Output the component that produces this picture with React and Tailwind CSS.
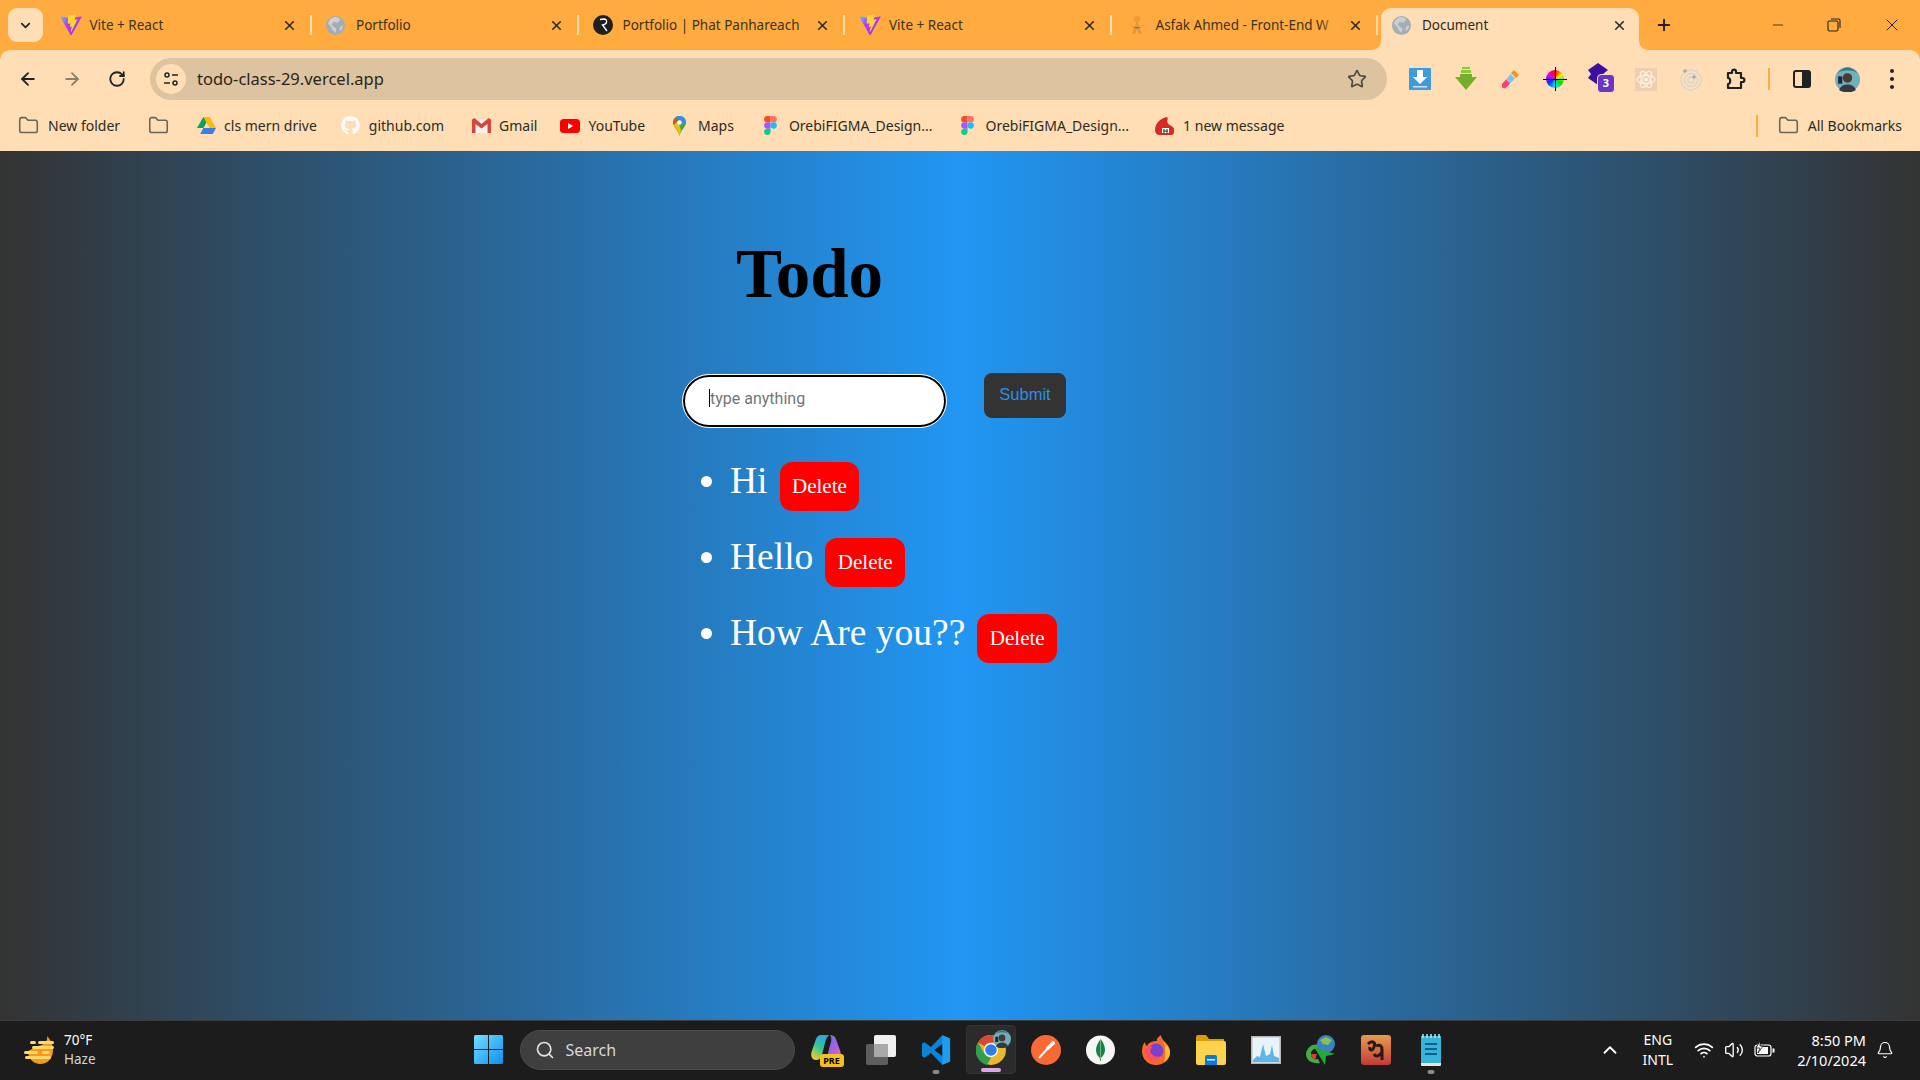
import React from "react";
import {
  ArrowLeft,
  ArrowRight,
  Bell,
  ChevronDown,
  ChevronUp,
  Folder,
  Minus,
  Plus,
  RotateCw,
  Search,
  Star,
  Volume2,
  Wifi,
  X,
} from "lucide-react";
import { FaGithub } from "react-icons/fa";

const ViteIcon = () => (
  <svg width="22" height="22" viewBox="0 0 410 404" className="shrink-0">
    <defs>
      <linearGradient id="viteV" x1="0" y1="0" x2="1" y2="0.8">
        <stop offset="0" stopColor="#41d1ff" />
        <stop offset="0.4" stopColor="#bd34fe" />
        <stop offset="1" stopColor="#8f3cf0" />
      </linearGradient>
    </defs>
    <path fill="url(#viteV)" d="M399.641 59.5246L215.643 388.545C211.844 395.338 202.084 395.378 198.228 388.618L10.5817 59.5563C6.38087 52.1896 12.6802 43.2665 21.0281 44.7586L205.223 77.6824C206.398 77.8924 207.601 77.8904 208.776 77.6763L389.119 44.8058C397.439 43.2894 403.768 52.1434 399.641 59.5246Z" />
    <path fill="#ffd62e" d="M292.965 1.5744L156.801 28.2552C154.563 28.6937 152.906 30.5903 152.771 32.8664L144.395 174.33C144.198 177.662 147.258 180.248 150.51 179.498L188.42 170.749C191.967 169.931 195.172 173.055 194.443 176.622L183.18 231.775C182.422 235.487 185.907 238.661 189.532 237.56L212.947 230.446C216.577 229.344 220.065 232.527 219.297 236.242L201.398 322.875C200.278 328.294 207.486 331.249 210.492 326.603L212.5 323.5L323.454 102.072C325.312 98.3645 322.108 94.137 318.036 94.9228L279.014 102.454C275.347 103.161 272.227 99.746 273.262 96.1583L298.731 7.86689C299.767 4.27314 296.636 0.855181 292.965 1.5744Z" />
  </svg>
);

const GlobeIcon = () => (
  <svg width="19" height="19" viewBox="0 0 20 20" className="shrink-0">
    <circle cx="10" cy="10" r="10" fill="#a3adb8" />
    <path fill="#e6e2da" d="M8 1 13 1.500 15 4 12 7 8 6 6 9 9 12 11 13 10 18 7 15 6 12 2 8 4 4Z" opacity="0.65" />
    <path fill="#e6e2da" d="M15 11 18 10 17 14 14 16Z" opacity="0.65" />
  </svg>
);

const RIcon = () => (
  <svg width="20" height="20" viewBox="0 0 20 20" className="shrink-0">
    <circle cx="10" cy="10" r="10" fill="#1f1f1f" />
    <path d="M7 4.500 11 4C15 4 14.500 9.500 9.500 10L14 16" fill="none" stroke="#fff" strokeWidth="1.300" />
  </svg>
);

const AsfakIcon = () => (
  <svg width="22" height="20" viewBox="0 0 22 20" className="shrink-0">
    <circle cx="11" cy="4" r="3" fill="#f09a32" />
    <path d="M11 6 16 19H13L11 14 9 19H6Z" fill="#f0922c" />
    <path d="M1 8 11 12 21 8 11 15Z" fill="#e8a34a" />
    <path d="M7 12H15L11 14Z" fill="#5b7cc4" />
  </svg>
);

const Tab = ({ icon, title, fade }) => (
  <div className="relative flex h-[34px] w-[266.5px] shrink-0 items-center pl-[14px] pr-[15px]">
    <div className="flex w-[30px] shrink-0 items-center">{icon}</div>
    <span className="flex-1 whitespace-nowrap text-[13.5px] text-[#3b3322]">{title}</span>
    {fade && <div className="absolute right-[36px] top-0 h-full w-[24px] bg-gradient-to-r from-transparent to-[#ffab40]" />}
    <X size={15} strokeWidth={2.6} className="shrink-0 text-[#2b2b2b]" />
    <div className="absolute right-0 top-[7px] h-[20px] w-[2px] bg-[#ffd9a8]" />
  </div>
);

const ActiveTab = () => (
  <div className="relative ml-[3px] flex h-[42px] w-[258px] shrink-0 items-center self-end rounded-t-[10px] bg-[#ffdeb5] pb-[8px] pl-[11px] pr-[12px]">
    <svg width="10" height="10" viewBox="0 0 10 10" className="absolute bottom-0 left-[-10px]">
      <path d="M10 0V10H0C6 10 10 6 10 0Z" fill="#ffdeb5" />
    </svg>
    <svg width="10" height="10" viewBox="0 0 10 10" className="absolute bottom-0 right-[-10px]">
      <path d="M0 0V10H10C4 10 0 6 0 0Z" fill="#ffdeb5" />
    </svg>
    <div className="flex w-[30px] shrink-0 items-center"><GlobeIcon /></div>
    <span className="flex-1 text-[13.5px] text-[#2f2a20]">Document</span>
    <X size={15} strokeWidth={2.6} className="text-[#2b2b2b]" />
  </div>
);

const DownloadExt = () => (
  <svg width="22" height="22" viewBox="0 0 22 22">
    <rect width="22" height="22" rx="1" fill="#3d9be0" />
    <path d="M8 2H14V9H18L11 16 4 9H8Z" fill="#fff" />
    <rect x="4" y="18" width="14" height="1.500" fill="#cfe6f7" />
  </svg>
);

const GreenExt = () => (
  <svg width="22" height="24" viewBox="0 0 22 24">
    <path d="M7 0H15V2H7ZM6 3H16V6H6Z" fill="#8cc63f" />
    <path d="M5 7H17V10H22L11 23 0 10H5Z" fill="#76ad2a" />
  </svg>
);

const DropperExt = () => (
  <svg width="20" height="22" viewBox="0 0 20 22">
    <path d="M13 2 18 7 15 10 10 5Z" fill="#f7931e" />
    <path d="M9.500 6 14 10.500 9 15.500 5 11.500Z" fill="#7cc5ef" />
    <path d="M5 11.500 9 15.500 4 20.500 1 19.500 1 16Z" fill="#ff3d77" />
  </svg>
);

const WheelExt = () => (
  <div className="relative h-[18px] w-[18px]">
    <div className="h-full w-full rounded-full bg-[conic-gradient(#ff0000,#ffee00,#00e000,#00e5ff,#0030ff,#e000ff,#ff0000)]" />
    <div className="absolute left-[8.5px] top-[-3px] h-[24px] w-[1px] bg-black" />
    <div className="absolute left-[-3px] top-[8.5px] h-[1px] w-[24px] bg-black" />
  </div>
);

const PurpleExt = () => (
  <div className="relative h-[26px] w-[30px]">
    <svg width="22" height="24" viewBox="0 0 22 24" className="absolute left-0 top-[-3px]">
      <path d="M11 0 21 7 16 11 21 15 11 22 1 15 4 11 1 7Z" fill="#3d0fa0" />
    </svg>
    <div className="absolute left-[10px] top-[8px] flex h-[19px] w-[18px] items-center justify-center rounded-[4px] border border-[#ffdeb5] bg-[#6a35c4] text-[11px] font-bold text-white">3</div>
  </div>
);

const ReactExt = () => (
  <svg width="22" height="23" viewBox="0 0 22 23">
    <rect width="22" height="23" fill="#ecd0b0" />
    <g fill="none" stroke="#fdf0e0" strokeWidth="1.200">
      <ellipse cx="11" cy="11.500" rx="9" ry="4" />
      <ellipse cx="11" cy="11.500" rx="9" ry="4" transform="rotate(60 11 11.500)" />
      <ellipse cx="11" cy="11.500" rx="9" ry="4" transform="rotate(120 11 11.500)" />
    </g>
    <circle cx="11" cy="11.500" r="2" fill="#fdf0e0" />
  </svg>
);

const OrbitExt = () => (
  <svg width="22" height="23" viewBox="0 0 22 23">
    <g fill="none" stroke="#d8d6d0" strokeWidth="1.400">
      <circle cx="11" cy="12" r="10" />
      <circle cx="11" cy="12" r="6.500" />
      <circle cx="11" cy="12" r="3" />
    </g>
    <circle cx="5" cy="3" r="1.800" fill="#a9a9a6" />
    <circle cx="14" cy="9" r="1.800" fill="#a9a9a6" />
  </svg>
);

const PuzzleIcon = () => (
  <svg width="20" height="22" viewBox="0 0 20 22" fill="none" stroke="#202124" strokeWidth="2.200" strokeLinejoin="round">
    <path d="M2 5H6V3.500C6 1 10 1 10 3.500V5H15V10H16.500C19 10 19 14 16.500 14H15V20H2V16C5 16 5 10 2 10Z" />
  </svg>
);

const SidePanelIcon = () => (
  <svg width="18" height="18" viewBox="0 0 18 18">
    <rect x="1" y="1" width="16" height="16" rx="2" fill="none" stroke="#202124" strokeWidth="2" />
    <rect x="9" y="1" width="8" height="16" rx="1" fill="#202124" />
  </svg>
);

const Avatar = ({ size }) => (
  <svg width={size} height={size} viewBox="0 0 24 24" className="shrink-0">
    <circle cx="12" cy="12" r="12" fill="#6fb0ba" />
    <path d="M2 6C7 2 17 2 22 6 19 3 15 .5 12 .5 9 .5 5 3 2 6Z" fill="#3a7280" />
    <circle cx="12" cy="10.500" r="4.500" fill="#4a3a32" />
    <path d="M4 22C6 15 18 15 20 22 16 25 8 25 4 22Z" fill="#2f3a44" />
    <rect x="3" y="9" width="4" height="7" fill="#1f2a33" />
  </svg>
);

const DriveIcon = () => (
  <svg width="19" height="17" viewBox="0 0 19 17">
    <path d="M6.300 0H12.700L6.400 11H0Z" fill="#0fa15d" />
    <path d="M6.300 0H12.700L19 11H12.600Z" fill="#fbbc04" />
    <path d="M3.200 17 6.400 11H19L15.800 17Z" fill="#3b7ded" />
  </svg>
);

const GmailIcon = () => (
  <svg width="19" height="15" viewBox="0 0 19 15">
    <path d="M0 1H19V15H0Z" fill="#f4f1ec" />
    <path d="M0 1.500V15H3.500V6L9.500 10.500 15.500 6V15H19V1.500L16.500 0 9.500 6 2.500 0Z" fill="#d6473b" />
  </svg>
);

const YoutubeIcon = () => (
  <svg width="20" height="14" viewBox="0 0 20 14">
    <rect width="20" height="14" rx="3.500" fill="#f00" />
    <path d="M8 4 13 7 8 10Z" fill="#fff" />
  </svg>
);

const MapsIcon = () => (
  <svg width="13" height="20" viewBox="0 0 13 20">
    <path d="M6.500 0C10 0 13 2.800 13 6.300 13 11 8 13.500 6.500 20 5 13.500 0 11 0 6.300 0 2.800 3 0 6.500 0Z" fill="#34a853" />
    <path d="M6.500 0C10 0 13 2.800 13 6.300L9 8 6 3 2.500 1.400C3.500.5 5 0 6.500 0Z" fill="#4285f4" />
    <path d="M2.500 1.400 0 6.300 .7 9 5 5Z" fill="#ea4335" />
    <path d="M.7 9C2 11.500 5 13.500 6.500 20L8 14 5 5Z" fill="#fbbc04" />
    <circle cx="6.500" cy="6.500" r="2.200" fill="#fff" />
  </svg>
);

const FigmaIcon = () => (
  <svg width="13" height="19" viewBox="0 0 12 18">
    <path d="M0 3a3 3 0 0 1 3-3h3v6H3a3 3 0 0 1-3-3Z" fill="#f24e1e" />
    <path d="M6 0h3a3 3 0 0 1 0 6H6Z" fill="#ff7262" />
    <path d="M0 9a3 3 0 0 1 3-3h3v6H3a3 3 0 0 1-3-3Z" fill="#a259ff" />
    <circle cx="9" cy="9" r="3" fill="#1abcfe" />
    <path d="M0 15a3 3 0 0 1 3-3h3v3a3 3 0 0 1-6 0Z" fill="#0acf83" />
  </svg>
);

const MessageIcon = () => (
  <svg width="20" height="20" viewBox="0 0 20 20">
    <path d="M13 1C7 2 1 7 1 14c0 3 2 5 5 5h11c2 0 3-1 3-3v-3c0-3-6-3-7-8 1-2 1-3 0-4Z" fill="#d62b20" />
    <path d="M8 12h7v5H8Z" fill="#fff" />
    <path d="M10 13v4M13 13v4M9 15h5" stroke="#333" strokeWidth="1" />
  </svg>
);

const Bookmark = ({ icon, label, gap, left }) => (
  <div className={`flex items-center ${gap} ${left}`}>
    {icon}
    {label && <span className="whitespace-nowrap text-[14px] text-[#2e2a22]">{label}</span>}
  </div>
);

const SunHaze = () => (
  <svg width="32" height="30" viewBox="0 0 32 30">
    <path d="M4 16C4 24 10 29 16 29 24 29 29 23 29 15 29 9 26 4 23 1 24 7 20 10 14 11Z" fill="#f39a1f" />
    <g fill="#ffd76a">
      <rect x="6" y="6" width="6" height="3" rx="1.500" />
      <rect x="14" y="6" width="16" height="3" rx="1.500" />
      <rect x="8" y="11" width="22" height="3" rx="1.500" />
      <rect x="0" y="16" width="14" height="3" rx="1.500" />
      <rect x="18" y="16" width="8" height="3" rx="1.500" />
      <rect x="1" y="21" width="26" height="3" rx="1.500" />
    </g>
  </svg>
);

const WindowsLogo = () => (
  <svg width="29" height="29" viewBox="0 0 29 29">
    <defs>
      <linearGradient id="winG" x1="0" y1="0" x2="1" y2="1">
        <stop offset="0" stopColor="#72e0ff" />
        <stop offset="1" stopColor="#0f8ef0" />
      </linearGradient>
    </defs>
    <path d="M0 1.500A1.500 1.500 0 0 1 1.500 0H14V14H0ZM15 0H27.500A1.500 1.500 0 0 1 29 1.500V14H15ZM0 15H14V29H1.500A1.500 1.500 0 0 1 0 27.500ZM15 15H29V27.500A1.500 1.500 0 0 1 27.500 29H15Z" fill="url(#winG)" />
  </svg>
);

const CopilotIcon = () => (
  <div className="relative h-[32px] w-[30px]">
    <svg width="30" height="27" viewBox="0 0 30 27">
      <defs>
        <linearGradient id="copA" x1="0.8" y1="0" x2="0.2" y2="1">
          <stop offset="0" stopColor="#2f9fe8" />
          <stop offset="0.5" stopColor="#2fc4a0" />
          <stop offset="1" stopColor="#f2d02e" />
        </linearGradient>
        <linearGradient id="copB" x1="0" y1="0" x2="1" y2="1">
          <stop offset="0" stopColor="#4a7cf0" />
          <stop offset="0.6" stopColor="#b05ee0" />
          <stop offset="1" stopColor="#ee6fb0" />
        </linearGradient>
      </defs>
      <path d="M10 1H18C15 4 14 8 13 13L11 21C10 24 8 26 5 26 1 26-.5 22 .5 18L5 5C6 2.500 8 1 10 1Z" fill="url(#copA)" />
      <path d="M19 1C22 1 24 2.500 25 5L29.500 18C30.500 22 28 26 24 26H13C16 24 17 20 18 15L20 8C20.500 5 20.500 3 19 1Z" fill="url(#copB)" />
    </svg>
    <div className="absolute bottom-[-1px] right-[-3px] flex h-[13px] w-[24px] items-center justify-center rounded-[3px] bg-[#f7c11b] text-[9px] font-bold leading-none text-black">PRE</div>
  </div>
);

const TaskViewIcon = () => (
  <svg width="30" height="30" viewBox="0 0 30 30">
    <rect x="0" y="9" width="22" height="21" rx="2" fill="#5e5e5e" />
    <rect x="8" y="0" width="22" height="22" rx="2" fill="#f0f0f0" />
    <rect x="8" y="9" width="14" height="13" fill="#a8a8a8" />
  </svg>
);

const VsCodeIcon = () => (
  <svg width="30" height="30" viewBox="0 0 100 100">
    <path d="M71 1 33 40 12 24 3 29V71L12 76 33 60 71 99 97 88V12ZM73 28V72L44 50Z" fill="#0a84d6" fillRule="evenodd" />
    <path d="M71 1 97 12V88L71 99Z" fill="#1e9cf0" />
  </svg>
);

const ChromeIcon = () => (
  <svg width="30" height="30" viewBox="0 0 30 30">
    <circle cx="15" cy="15" r="15" fill="#e8b92c" />
    <path d="M15 0A15 15 0 0 1 28 7.500H15A7.500 7.500 0 0 0 8.500 11.300L2 7.500A15 15 0 0 1 15 0Z" fill="#d9463a" />
    <path d="M2 7.500 8.500 18.800A7.500 7.500 0 0 0 15 22.500L11 30A15 15 0 0 1 2 7.500Z" fill="#2f9e4f" />
    <circle cx="15" cy="15" r="7" fill="#fff" />
    <circle cx="15" cy="15" r="5.800" fill="#2f7ded" />
  </svg>
);

const PostmanIcon = () => (
  <svg width="30" height="30" viewBox="0 0 30 30">
    <circle cx="15" cy="15" r="15" fill="#f76935" />
    <path d="M8 23 18 12" stroke="#fff" strokeWidth="2" />
    <path d="M16 14 21 9" stroke="#fff" strokeWidth="3.500" />
    <circle cx="22" cy="8" r="2" fill="#fff" />
  </svg>
);

const MongoIcon = () => (
  <svg width="29" height="30" viewBox="0 0 29 30">
    <circle cx="14.500" cy="15" r="14.500" fill="#f6f6f6" />
    <path d="M14.500 4C18 8 19 12 19 15 19 19 16 22 15 23L14.800 26H14L13.800 23C12 21 10 19 10 15 10 11 12 8 14.500 4Z" fill="#13834a" />
    <path d="M14.500 4V24" stroke="#89c27d" strokeWidth=".8" />
  </svg>
);

const FirefoxIcon = () => (
  <svg width="30" height="30" viewBox="0 0 30 30">
    <path d="M15 30C7 30 1 24 1 16 1 12 2 9 4 7 4 9 5 10 6 11 8 7 12 6 16 6 15 4 17 2 20 0 20 3 22 5 25 8 28 11 29 14 29 17 29 24 23 30 15 30Z" fill="#f5692c" />
    <path d="M22 6C25 9 29 13 29 17 29 21 27 25 23 27 25 22 25 12 22 6Z" fill="#ffbd2e" />
    <circle cx="15" cy="16" r="7.500" fill="#7b3fd1" />
    <path d="M4 14C7 11 10 11 12 12 9 13 9 16 10 18 12 22 18 23 22 20 19 26 10 27 6 22 4 20 3 17 4 14Z" fill="#ff4f5e" />
  </svg>
);

const ExplorerIcon = () => (
  <svg width="30" height="30" viewBox="0 0 30 30">
    <path d="M0 2A2 2 0 0 1 2 0H10L13 4H28V12H0Z" fill="#d99c0a" />
    <path d="M0 6H28A2 2 0 0 1 30 8V28A2 2 0 0 1 28 30H2A2 2 0 0 1 0 28Z" fill="#fcd34d" />
    <path d="M9 22A2 2 0 0 1 11 20H19A2 2 0 0 1 21 22V30H9Z" fill="#0e78d6" />
    <rect x="11" y="24" width="8" height="1.500" fill="#dbeafe" />
  </svg>
);

const MonitorIcon = () => (
  <svg width="30" height="28" viewBox="0 0 30 28">
    <rect width="30" height="28" fill="#b8b8b8" />
    <rect x="1.500" y="1.500" width="27" height="25" fill="#e9f3fa" />
    <path d="M2 24 6 20 9 21 12 8 15 20 19 18 21 9 23 20 28 22V26H2Z" fill="#5cb6e8" />
  </svg>
);

const IdmIcon = () => (
  <svg width="30" height="30" viewBox="0 0 30 30">
    <path d="M0 19C1 11 8 8 14 10L12 14C8 13 5 15 5 19 5 23 8 25 12 24L14 28C7 29 0 26 0 19Z" fill="#3fae49" />
    <path d="M5 19H11L9 25C7 24 5 22 5 19Z" fill="#e53935" />
    <circle cx="20" cy="9" r="9" fill="#3b82c4" />
    <path d="M14 5 20 2 26 5 22 10 17 9Z" fill="#8bc34a" />
    <path d="M8 12 29 19 20 21 19 30Z" fill="#1faa3a" />
  </svg>
);

const RedAppIcon = () => (
  <div className="flex h-[30px] w-[30px] items-center justify-center rounded-[3px] bg-gradient-to-b from-[#e89a4a] to-[#c2383a]">
    <svg width="20" height="24" viewBox="0 0 20 24" fill="none" stroke="#2a1a12" strokeWidth="3">
      <path d="M2 6C6 2 10 4 8 9 6 14 3 12 4 9M10 8C14 6 16 8 16 12V22M16 14C12 20 9 18 8 16" />
    </svg>
  </div>
);

const NotepadIcon = () => (
  <svg width="20" height="32" viewBox="0 0 20 32">
    <rect y="2" width="20" height="30" rx="1" fill="#f2e5c5" />
    <rect y="2" width="20" height="27" fill="#36b5d8" />
    <path d="M2 0V4M6 0V4M10 0V4M14 0V4M18 0V4" stroke="#bfe7f2" strokeWidth="1.500" />
    <path d="M4 10H16M4 15H16M4 20H16" stroke="#0b5f8a" strokeWidth="2" />
  </svg>
);

const BatteryIcon = () => (
  <svg width="21" height="17" viewBox="0 0 21 17" fill="none">
    <rect x="1" y="4" width="16" height="11" rx="2.500" stroke="#fff" strokeWidth="1.200" />
    <rect x="3" y="6" width="11" height="7" fill="#fff" />
    <rect x="18.500" y="7.500" width="2" height="4" fill="#fff" />
    <path d="M6 0 2 7H6L4 12 9 5H6Z" fill="#fff" stroke="#1c1c1c" strokeWidth=".8" />
  </svg>
);

const TaskSlot = ({ children, dot, active }) => (
  <div className={`relative flex h-[49px] w-[50px] shrink-0 items-center justify-center rounded-[4px] ${active ? "border border-[#333] bg-[#2b2b2b]" : ""}`}>
    {children}
    {dot && <div className="absolute bottom-0 left-1/2 h-[4px] w-[7px] -translate-x-1/2 rounded-full bg-[#8a8a8a]" />}
    {active && <div className="absolute bottom-[1px] left-1/2 h-[4px] w-[20px] -translate-x-1/2 rounded-full bg-[#e0a8e6]" />}
  </div>
);

export default function App() {
  return (
    <div className="flex h-screen w-full flex-col overflow-hidden bg-[#ffab40] font-['Noto_Sans',sans-serif]">
      {/* tab strip */}
      <div className="flex h-[50px] shrink-0 items-center bg-[#ffab40]">
        <div className="ml-[8px] mr-[2.5px] flex h-[34px] w-[35px] shrink-0 items-center justify-center rounded-[9px] bg-[#ffdeb5]">
          <ChevronDown size={15} strokeWidth={2.8} className="text-[#222]" />
        </div>
        <Tab icon={<ViteIcon />} title="Vite + React" />
        <Tab icon={<GlobeIcon />} title="Portfolio" />
        <Tab icon={<RIcon />} title="Portfolio | Phat Panhareach" />
        <Tab icon={<ViteIcon />} title="Vite + React" />
        <Tab icon={<AsfakIcon />} title="Asfak Ahmed - Front-End W" fade />
        <ActiveTab />
        <Plus size={18} strokeWidth={2.6} className="ml-[16px] shrink-0 text-[#222]" />
        <Minus size={16} strokeWidth={1.2} className="ml-[97px] shrink-0 text-[#222]" />
        <svg width="14" height="14" viewBox="0 0 14 14" fill="none" stroke="#222" strokeWidth="1.100" className="ml-[41px] shrink-0">
          <rect x="1" y="3" width="10" height="10" rx="1.500" />
          <path d="M4 1H11.500A1.500 1.500 0 0 1 13 2.500V10" />
        </svg>
        <X size={20} strokeWidth={1.2} className="ml-[41px] shrink-0 text-[#222]" />
      </div>

      {/* toolbar */}
      <div className="flex h-[50px] shrink-0 items-center rounded-t-[10px] bg-[#ffdeb5] pt-[8px]">
        <ArrowLeft size={20} strokeWidth={2.2} className="ml-[18px] text-[#222]" />
        <ArrowRight size={20} strokeWidth={2.2} className="ml-[24px] text-[#8c8068]" />
        <RotateCw size={18} strokeWidth={2.4} className="ml-[26px] text-[#222]" />
        <div className="ml-[24px] flex h-[42px] w-[1237px] items-center rounded-full bg-[#dec3a0]">
          <div className="ml-[6px] flex h-[30px] w-[30px] items-center justify-center rounded-full bg-[#ffdeb5]">
            <svg width="16" height="16" viewBox="0 0 16 16" fill="none" stroke="#222" strokeWidth="1.500">
              <circle cx="4" cy="4" r="2" />
              <path d="M9 4H15M1 12H7" />
              <circle cx="12" cy="12" r="2" />
            </svg>
          </div>
          <span className="ml-[11px] mt-[1px] flex-1 text-[16.5px] text-[#2b2518]">todo-class-29.vercel.app</span>
          <Star size={20} strokeWidth={2} className="mr-[20px] text-[#4e4a44]" />
        </div>
        <div className="ml-[22px] flex items-center">
          <div className="flex w-[22px] justify-center"><DownloadExt /></div>
          <div className="ml-[24px] flex w-[22px] justify-center"><GreenExt /></div>
          <div className="ml-[23px] flex w-[22px] justify-center"><DropperExt /></div>
          <div className="ml-[22px] flex w-[22px] justify-center"><WheelExt /></div>
          <div className="ml-[21px] flex w-[30px] justify-center"><PurpleExt /></div>
          <div className="ml-[18px] flex w-[22px] justify-center"><ReactExt /></div>
          <div className="ml-[23px] flex w-[22px] justify-center"><OrbitExt /></div>
          <div className="ml-[23px] flex w-[22px] justify-center"><PuzzleIcon /></div>
          <div className="ml-[21px] h-[22px] w-[2px] bg-[#ffab40]" />
          <div className="ml-[23px]"><SidePanelIcon /></div>
          <div className="ml-[24px]"><Avatar size={25} /></div>
          <div className="ml-[30px] flex w-[4px] flex-col gap-[4px]">
            <div className="h-[4px] w-[4px] rounded-full bg-[#222]" />
            <div className="h-[4px] w-[4px] rounded-full bg-[#222]" />
            <div className="h-[4px] w-[4px] rounded-full bg-[#222]" />
          </div>
        </div>
      </div>

      {/* bookmarks */}
      <div className="flex h-[51px] shrink-0 items-center bg-[#ffdeb5]">
        <Bookmark left="ml-[18px]" gap="gap-[9px]" icon={<Folder size={21} strokeWidth={1.8} className="text-[#6a655c]" />} label="New folder" />
        <Bookmark left="ml-[28px]" icon={<Folder size={21} strokeWidth={1.8} className="text-[#6a655c]" />} />
        <Bookmark left="ml-[28px]" gap="gap-[8px]" icon={<DriveIcon />} label="cls mern drive" />
        <Bookmark left="ml-[24px]" gap="gap-[9px]" icon={<FaGithub size={19} className="text-white" />} label="github.com" />
        <Bookmark left="ml-[28px]" gap="gap-[8px]" icon={<GmailIcon />} label="Gmail" />
        <Bookmark left="ml-[23px]" gap="gap-[8px]" icon={<YoutubeIcon />} label="YouTube" />
        <Bookmark left="ml-[28px]" gap="gap-[12px]" icon={<MapsIcon />} label="Maps" />
        <Bookmark left="ml-[30px]" gap="gap-[12px]" icon={<FigmaIcon />} label="OrebiFIGMA_Design..." />
        <Bookmark left="ml-[28px]" gap="gap-[12px]" icon={<FigmaIcon />} label="OrebiFIGMA_Design..." />
        <Bookmark left="ml-[25px]" gap="gap-[9px]" icon={<MessageIcon />} label="1 new message" />
        <div className="ml-auto mr-[20px] h-[22px] w-[2px] bg-[#ffab40]" />
        <Bookmark left="mr-[18px]" gap="gap-[9px]" icon={<Folder size={21} strokeWidth={1.8} className="text-[#6a655c]" />} label="All Bookmarks" />
      </div>

      {/* page */}
      <div className="flex-1 bg-linear-to-r/srgb from-[#333333] via-[#2196f3] to-[#333333] pl-[682px] font-['Liberation_Serif',serif]">
        <h1 className="ml-[54px] mt-[84px] text-[69px] font-bold leading-[78px] text-black">Todo</h1>
        <div className="mt-[60px] flex items-start">
          <div className="relative ml-[1px] mt-[2px]">
            <input
              placeholder="type anything"
              className="h-[52px] w-[263px] rounded-full border-2 border-black bg-white pb-[6px] pl-[25px] font-['Roboto',sans-serif] text-[16px] outline-1 outline-white placeholder:text-[#757575]"
            />
            <span className="absolute left-[26px] top-[14px] h-[18px] w-[1px] bg-black" />
          </div>
          <button className="ml-[38px] h-[45px] w-[82px] rounded-[8px] bg-[#333333] pb-[2px] font-['Liberation_Sans',sans-serif] text-[16.5px] text-[#2b8fe8]">Submit</button>
        </div>
        <ul className="mt-[33px] list-disc pl-[48px] text-[37.5px] leading-[41px] text-white marker:text-white">
          {["Hi", "Hello", "How Are you??"].map((item) => (
            <li key={item} className="mb-[25.5px]">
              {item}
              <button className="ml-[12px] inline-block h-[49px] rounded-[12px] bg-[#ff0000] px-[12.5px] text-[21px] leading-[24px] text-white">Delete</button>
            </li>
          ))}
        </ul>
      </div>

      {/* taskbar */}
      <div className="flex h-[60px] shrink-0 items-center border-t border-[#3c3c3c] bg-[#1c1c1c] pb-[2px] font-['Noto_Sans',sans-serif] text-white">
        <div className="ml-[24px]"><SunHaze /></div>
        <div className="ml-[8px] flex flex-col text-[13.5px] leading-[19px]">
          <span>70°F</span>
          <span className="text-[#d4d4d4]">Haze</span>
        </div>
        <div className="ml-[378px]"><WindowsLogo /></div>
        <div className="ml-[17px] flex h-[40px] w-[275px] items-center rounded-full border border-[#4a4a4a] bg-[#3f3f3f]">
          <Search size={20} strokeWidth={2} className="ml-[14px] text-[#e0e0e0]" />
          <span className="ml-[11px] text-[16px] text-[#d8d8d8]">Search</span>
        </div>
        <div className="ml-[6px] flex items-center gap-[5px]">
          <TaskSlot><CopilotIcon /></TaskSlot>
          <TaskSlot><TaskViewIcon /></TaskSlot>
          <TaskSlot dot><VsCodeIcon /></TaskSlot>
          <TaskSlot active>
            <ChromeIcon />
            <div className="absolute right-[4px] top-[4px]"><Avatar size={18} /></div>
          </TaskSlot>
          <TaskSlot><PostmanIcon /></TaskSlot>
          <TaskSlot><MongoIcon /></TaskSlot>
          <TaskSlot><FirefoxIcon /></TaskSlot>
          <TaskSlot><ExplorerIcon /></TaskSlot>
          <TaskSlot><MonitorIcon /></TaskSlot>
          <TaskSlot><IdmIcon /></TaskSlot>
          <TaskSlot><RedAppIcon /></TaskSlot>
          <TaskSlot dot><NotepadIcon /></TaskSlot>
        </div>
        <ChevronUp size={22} strokeWidth={2} className="ml-[143px]" />
        <div className="ml-[22px] flex flex-col items-center text-[14px] leading-[20px]">
          <span>ENG</span>
          <span>INTL</span>
        </div>
        <Wifi size={20} strokeWidth={2} className="ml-[21px]" />
        <Volume2 size={20} strokeWidth={1.6} className="ml-[10px]" />
        <div className="ml-[10px]"><BatteryIcon /></div>
        <div className="ml-auto flex flex-col items-end text-[14.5px] leading-[20px]">
          <span>8:50 PM</span>
          <span>2/10/2024</span>
        </div>
        <Bell size={18} strokeWidth={1.6} className="ml-[10px] mr-[26px]" />
      </div>
    </div>
  );
}
